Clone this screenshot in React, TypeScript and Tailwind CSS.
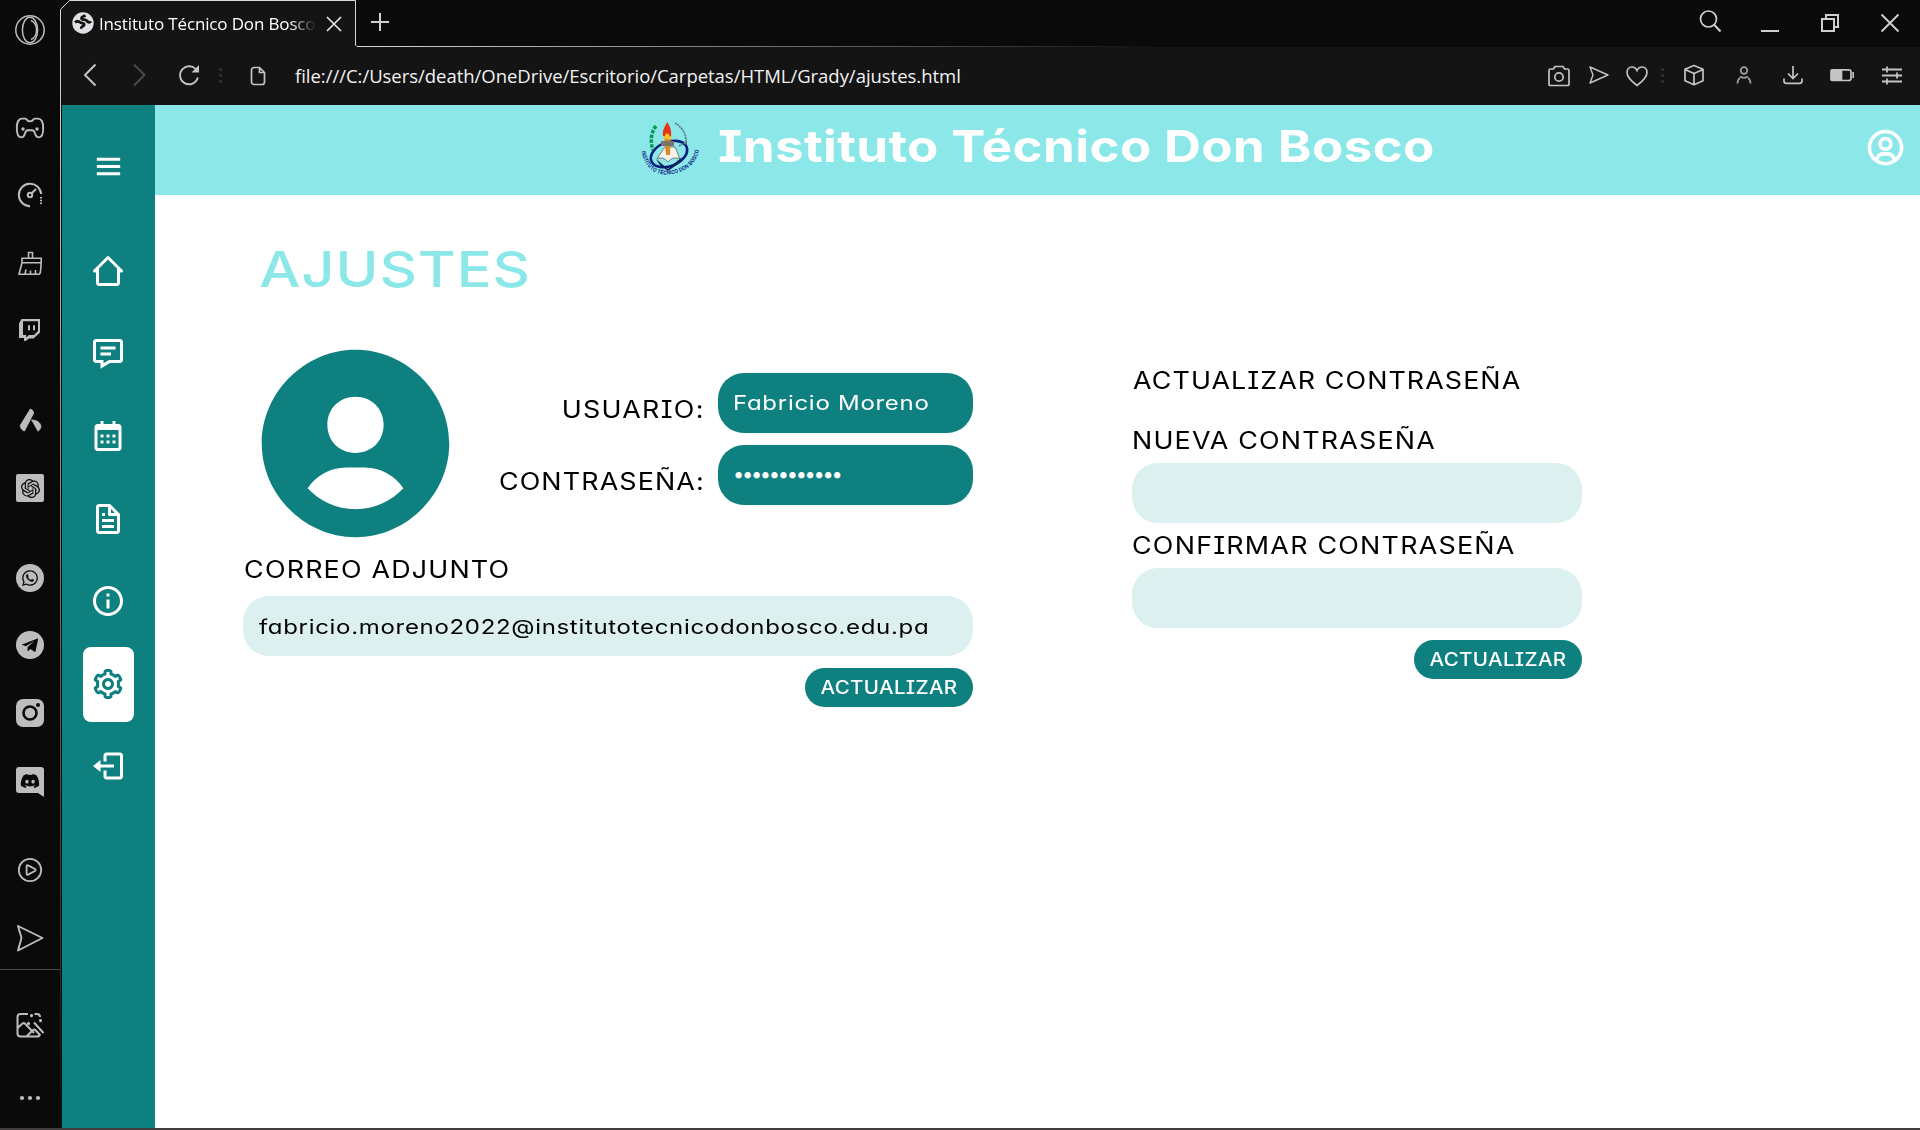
import React from "react";
import {
  BiMenu,
  BiMessageDetail,
  BiCalendar,
  BiFile,
  BiInfoCircle,
  BiCog,
  BiLogOut,
  BiUserCircle,
  BiSolidUserCircle,
} from "react-icons/bi";
import { SiOpenai } from "react-icons/si";
import { FaWhatsapp, FaDiscord } from "react-icons/fa";

/* ---------- Browser side bar ---------- */

type SvgProps = { className?: string; box?: string; children: React.ReactNode };

function Svg({ className = "size-8", box = "0 0 32 32", children }: SvgProps) {
  return (
    <svg className={className} viewBox={box} fill="none" stroke="currentColor" strokeWidth="1.7">
      {children}
    </svg>
  );
}

const OperaLogo = (
  <Svg>
    <circle cx="16" cy="16" r="14.2" strokeWidth="1.5" />
    <ellipse cx="16" cy="16" rx="7.6" ry="12.8" strokeWidth="1.5" />
    <path d="M17 6.5a8 10 0 0 1 0 19" strokeWidth="1.4" />
  </Svg>
);

const Gamepad = (
  <Svg>
    <path
      d="M8 6.600h3.200c1.200 0 1.600.9 2.400 2 .6.800 4.200.800 4.800 0 .8-1.100 1.200-2 2.400-2H24c3.600 0 5.200 4.500 5.200 9.500 0 4.900-1 9.300-4.200 9.300-2.800 0-3.400-1.600-4-3.800-.5-1.900-1.200-3.300-2.800-3.300h-4.400c-1.600 0-2.300 1.400-2.800 3.300-.6 2.200-1.200 3.800-4 3.800-3.200 0-4.200-4.400-4.200-9.300 0-5 1.600-9.500 5.200-9.500Z"
      strokeWidth="1.900"
    />
    <circle cx="9" cy="17" r="1.700" fill="currentColor" stroke="none" />
    <circle cx="23" cy="17" r="1.700" fill="currentColor" stroke="none" />
  </Svg>
);

const Speed = (
  <Svg>
    <path d="M16 27.200A11.200 11.200 0 1 1 27.200 15" strokeWidth="2" />
    <path d="M17.500 14.500 22 10" strokeWidth="2" />
    <circle cx="16" cy="16" r="2.200" strokeWidth="2" />
    <path d="M27 18v1.500M27 20.800v1.500M27 23.500V25" strokeWidth="2" />
  </Svg>
);

const Cleaner = (
  <Svg>
    <path
      d="M14.500 11V5.500h4V11M8 11.200h19.200v4.600H8zM8 15.800 5 27.200h19.500c1.300 0 1.800-.8 2-2.500l.7-8.900M11 27l1-4.500M16.500 27v-3.500M21.500 27v-4"
      strokeWidth="1.600"
    />
  </Svg>
);

const Twitch = (
  <Svg>
    <path d="M7.500 5H26v13.500l-6.500 6h-4.300L11.500 27H10v-3H5V9.500Z" fill="currentColor" stroke="none" />
    <path d="M9 7.200h15v9.800l-4 4h-5l-2.800 2.500V21H9Z" fill="#0a0a0a" stroke="none" />
    <path d="M15 11.200v5M20 11.200v5" strokeWidth="2" />
  </Svg>
);

const Aria = (
  <Svg>
    <path d="M16.300 5c1.700.4 3 1.800 3.400 4L10.500 27c-2.600-.8-4.200-2.700-4.300-5.500Z" fill="currentColor" stroke="currentColor" strokeWidth=".8" strokeLinejoin="round" />
    <path d="M17.500 16c4.700 0 8.800 2 9.500 6.500-.4 2.300-1.600 3.700-3 4.700-2.400-3.900-3.800-7.300-6.500-11.200Z" fill="currentColor" strokeWidth=".8" />
  </Svg>
);

const ChatGpt = (
  <span className="flex size-7 items-center justify-center rounded-[2px] bg-[#bdbdbd] text-[#0a0a0a]">
    <SiOpenai size={19} />
  </span>
);

const WhatsApp = (
  <span className="flex size-7 items-center justify-center rounded-full bg-[#bdbdbd] text-[#0a0a0a]">
    <FaWhatsapp size={18} />
  </span>
);

const Telegram = (
  <Svg>
    <circle cx="16" cy="16" r="14" fill="currentColor" stroke="none" />
    <path
      d="M7.500 15.800 23 9.700c.8-.3 1.200.1 1 1L21.600 22c-.2 1-.8 1.100-1.500.6l-3.700-2.700-1.900 1.900c-.5.400-1 .3-1-.4l.2-3.300 6.500-6-8.200 5.100-3.500-1.100c-1.200-.3-1.100-.9-1-1.300Z"
      fill="#0a0a0a"
      stroke="none"
    />
  </Svg>
);

const Instagram = (
  <Svg>
    <rect x="2" y="2" width="28" height="28" rx="7" fill="currentColor" stroke="none" />
    <circle cx="16" cy="16" r="6.500" stroke="#0a0a0a" strokeWidth="2.600" />
    <circle cx="24" cy="8" r="2" fill="#0a0a0a" stroke="none" />
  </Svg>
);

const Discord = (
  <span className="relative flex size-8 items-center justify-center text-[#0a0a0a]">
    <svg className="absolute inset-0 size-8" viewBox="0 0 32 32">
      <path d="M5 2h22a3 3 0 0 1 3 3v27l-6-4H5a3 3 0 0 1-3-3V5a3 3 0 0 1 3-3Z" fill="#bdbdbd" />
    </svg>
    <FaDiscord size={20} className="relative" />
  </span>
);

const Player = (
  <Svg>
    <circle cx="16" cy="16" r="11.200" strokeWidth="1.800" />
    <path d="M12.600 12.200v7.600c0 .8.700 1.200 1.400.8l7-3.600c.8-.4.8-1.500 0-2l-7-3.600c-.7-.4-1.400 0-1.400.8Z" strokeWidth="1.800" />
  </Svg>
);

const SendIcon = (
  <Svg>
    <path d="M4 4 28.500 16 4 28.500 7.500 16Z" strokeWidth="1.900" strokeLinejoin="round" />
  </Svg>
);

const Picture = (
  <Svg>
    <path
      d="M14 5H6.500a3 3 0 0 0-3 3v16.500a3 3 0 0 0 3 3H23a3 3 0 0 0 3-2.500M20.500 5H23a3 3 0 0 1 3 3M3.500 19l5-4.500c.8-.7 1.600-.7 2.400 0L20 24M13 27l6-6c.8-.8 1.600-.7 2.300 0l4.700 5M20 13.500 29.500 24"
      strokeWidth="2"
    />
    <path d="M17.500 5V8.200M16 6.700h3M14.500 13V16.200M13 14.700h3M26.500 10V13.200M25 11.700h3" strokeWidth="1.800" />
  </Svg>
);

const More = (
  <Svg>
    <g fill="currentColor" stroke="none">
      <circle cx="8" cy="16" r="2.100" />
      <circle cx="16" cy="16" r="2.100" />
      <circle cx="24" cy="16" r="2.100" />
    </g>
  </Svg>
);

const DOCK: [string, React.ReactNode][] = [
  ["mt-3.5", OperaLogo],
  ["mt-[66px]", Gamepad],
  ["mt-[35px]", Speed],
  ["mt-9", Cleaner],
  ["mt-[35px]", Twitch],
  ["mt-[58px]", Aria],
  ["mt-9", ChatGpt],
  ["mt-[58px]", WhatsApp],
  ["mt-[35px]", Telegram],
  ["mt-9", Instagram],
  ["mt-9", Discord],
  ["mt-[57px]", Player],
  ["mt-9", SendIcon],
];

function Dock() {
  return (
    <aside className="flex h-full w-[60px] shrink-0 flex-col items-center text-[#bdbdbd]">
      {DOCK.map(([margin, icon], i) => (
        <div key={i} className={`flex size-8 shrink-0 items-center justify-center ${margin}`}>
          {icon}
        </div>
      ))}
      <div className="mt-[15px] h-px w-full shrink-0 bg-[#4a4a4a]" />
      <div className="mt-[39px] size-8 shrink-0">{Picture}</div>
      <div className="mt-[41px] size-8 shrink-0">{More}</div>
    </aside>
  );
}

/* ---------- Tab strip and address bar ---------- */

function TabStrip() {
  return (
    <div className="flex h-[47px] shrink-0 items-center">
      <div className="mr-[15px] flex h-full w-[294px] items-center bg-[#141414] [clip-path:polygon(8px_0,100%_0,100%_100%,0_100%,0_8px)]">
        <svg className="mb-px ml-[10px] size-[22px] shrink-0" viewBox="0 0 22 22">
          <circle cx="11" cy="11" r="10.700" fill="#dfe1e5" />
          <path
            d="M3 10.500C4.500 9 6.500 8.800 8 10.300c1 1 2.500.8 3.500 1.200 1 .6.900 1.700 0 2.200-1.300.6-2.500 1.300-2.200 3M13.500 3.500c-1.500.6-3.800 1-4 2.600-.1 1.300 1.500 1.500 3 1.500 1.600 0 2 1.200 3.300 2.200 1.200.8 2.500.5 2.900-.5"
            fill="none"
            stroke="#141414"
            strokeWidth="2.800"
          />
        </svg>
        <span className="ml-[5px] w-[217px] overflow-hidden text-[17px] leading-[30px] tracking-[-0.15px] whitespace-nowrap text-white [mask-image:linear-gradient(to_right,black_88%,transparent)]">
          Instituto Técnico Don Bosco
        </span>
        <svg className="ml-[10px] size-4 shrink-0" viewBox="0 0 16 16" stroke="#e2e2e2" strokeWidth="1.700">
          <path d="m1 1 14 14M15 1 1 15" />
        </svg>
      </div>
      <svg className="mb-[3px] size-[18px]" viewBox="0 0 18 18" stroke="#d0d0d0" strokeWidth="2">
        <path d="M9 0v18M0 9h18" />
      </svg>
      <div className="ml-auto flex items-center gap-9 pr-[18px] pb-px text-[#cfcfcf]">
        <Svg className="mr-0 mb-1 size-6" box="0 0 24 24">
          <circle cx="10.500" cy="10" r="8" strokeWidth="1.700" />
          <path d="m16 15.500 6.500 7" strokeWidth="2" />
        </Svg>
        <Svg className="size-6" box="0 0 24 24">
          <path d="M3 20h18" strokeWidth="2" />
        </Svg>
        <Svg className="size-6" box="0 0 24 24">
          <path d="M4 8h12v12H4zM8 8V4h12v12h-4" strokeWidth="2" />
        </Svg>
        <Svg className="size-6" box="0 0 24 24">
          <path d="m3.500 3.500 17 17M20.500 3.500l-17 17" strokeWidth="1.900" />
        </Svg>
      </div>
    </div>
  );
}

function Dots() {
  return (
    <div className="flex flex-col gap-[3px]">
      <i className="size-[3px] bg-[#2e2e2e]" />
      <i className="size-[3px] bg-[#2e2e2e]" />
      <i className="size-[3px] bg-[#2e2e2e]" />
    </div>
  );
}

function AddressBar() {
  return (
    <div className="flex h-[58px] shrink-0 items-center bg-[#141414] pr-4 pb-0.5 text-[#c4c4c4]">
      <Svg className="ml-4 size-6" box="0 0 24 24">
        <path d="M17.500 1.500 7 12l10.500 10.500" strokeWidth="2" />
      </Svg>
      <Svg className="ml-[26px] size-6 text-[#4a4a4a]" box="0 0 24 24">
        <path d="M6 1.500 16.500 12 6 22.500" strokeWidth="2" />
      </Svg>
      <Svg className="ml-[25px] size-6" box="0 0 24 24">
        <path d="M20 8A9 9 0 1 0 20.800 14.500" strokeWidth="1.900" />
        <path d="M22 2v7.500h-7.500Z" fill="currentColor" stroke="none" />
      </Svg>
      <div className="ml-[18px]">
        <Dots />
      </div>
      <Svg className="mt-0.5 ml-[24px] size-6" box="0 0 24 24">
        <path d="M8 3.500h5.500l5 5V18a2.500 2.500 0 0 1-2.500 2.500H8A2.500 2.500 0 0 1 5.500 18V6A2.500 2.500 0 0 1 8 3.500ZM13.500 3.500v5h5" />
      </Svg>
      <span className="mt-0.5 ml-[25px] text-[18.5px] leading-[30px] tracking-[-0.03px] whitespace-nowrap text-[#f2f2f2]">
        file:///C:/Users/death/OneDrive/Escritorio/Carpetas/HTML/Grady/ajustes.html
      </span>
      <Svg className="mt-px ml-auto size-6" box="0 0 24 24">
        <path d="M3.500 5h3l1.500-2.500h8L17.500 5h3c1 0 1.500.5 1.500 1.500v14c0 .7-.5 1-1.500 1h-17c-1 0-1.500-.3-1.500-1v-14C2 5.500 2.500 5 3.500 5Z" />
        <circle cx="12" cy="13" r="4.200" />
      </Svg>
      <Svg className="ml-4 size-6" box="0 0 24 24">
        <path d="M3 4 21 12 3 20 6 12Z" strokeWidth="1.400" strokeLinejoin="round" />
      </Svg>
      <Svg className="mt-px ml-[14px] size-6" box="0 0 24 24">
        <path d="M12 21.500C6 17 2 13 2 8.500 2 5.500 4 3 7 3c2.200 0 4 1.200 5 3.500C13 4.200 14.800 3 17 3c3 0 5 2.500 5 5.500 0 4.500-4 8.500-10 13Z" />
      </Svg>
      <div className="ml-[12px]">
        <Dots />
      </div>
      <Svg className="ml-[18px] size-6" box="0 0 24 24">
        <path d="m12 2.500 9 3.800v11.400l-9 4-9-4V6.300ZM3 6.500l9 4 9-4M12 10.500v11" strokeLinejoin="round" />
      </Svg>
      <Svg className="ml-[26px] size-6 text-[#a2a2a2]" box="0 0 24 24">
        <circle cx="12" cy="7.500" r="3.300" />
        <path d="M5.500 20.500c0-3 .8-4.500 2.500-5.500M16 15c1.700 1 2.500 2.500 2.500 5.500M8 13.500c2.500 1.600 5.500 1.600 8 0" />
      </Svg>
      <Svg className="ml-[25px] size-6" box="0 0 24 24">
        <path d="M12 3v12M7 10.500l5 5 5-5M3 15.500V18c0 1.500.8 2.300 2.300 2.300h13.400c1.500 0 2.300-.8 2.300-2.300v-2.500" />
      </Svg>
      <Svg className="ml-[25px] size-6" box="0 0 24 24">
        <rect x="1" y="6.800" width="20" height="10.700" rx="2.300" />
        <path d="M1.500 7h10v10.200h-10Z" fill="currentColor" />
        <path d="M23.200 9v6" />
      </Svg>
      <Svg className="ml-[26px] size-6" box="0 0 24 24">
        <path d="M2 6.500h20M2 12.500h20M2 18.500h20M7 3.500v6M17 9.500v6M7 15.500v6" strokeWidth="1.800" />
      </Svg>
    </div>
  );
}

/* Thin outline that wraps the active tab and fades along both edges. */
function TabOutline() {
  return (
    <svg className="pointer-events-none absolute inset-0 h-[1130px] w-[1920px]" viewBox="0 0 1920 1130" fill="none">
      <defs>
        <linearGradient id="fadeDown" gradientUnits="userSpaceOnUse" x1="0" y1="0" x2="0" y2="1128">
          <stop offset="0" stopColor="#e0e0e0" />
          <stop offset="1" stopColor="#0f0f0f" />
        </linearGradient>
        <linearGradient id="fadeRight" gradientUnits="userSpaceOnUse" x1="356" y1="0" x2="1150" y2="0">
          <stop offset="0" stopColor="#d8d8d8" />
          <stop offset="1" stopColor="#111111" />
        </linearGradient>
      </defs>
      <path d="M60.500 1128V9.500L69.500 .5H70" stroke="url(#fadeDown)" />
      <path d="M69.500 .5H355.500V45L357 46.500" stroke="#d8d8d8" />
      <path d="M357 46h793v1h-793z" fill="url(#fadeRight)" />
    </svg>
  );
}

/* ---------- Page ---------- */

function HomeIcon() {
  return (
    <svg className="size-9" viewBox="0 0 24 24" fill="currentColor">
      <path d="M3 13h1v7c0 1.103.897 2 2 2h12c1.103 0 2-.897 2-2v-7h1a1 1 0 0 0 .707-1.707l-9-9a.999.999 0 0 0-1.414 0l-9 9A1 1 0 0 0 3 13zm9-8.586 6 6V15l.001 5H6v-9.585l6-6.001z" />
    </svg>
  );
}

const MENU = [
  { icon: <HomeIcon /> },
  { icon: <BiMessageDetail size={36} /> },
  { icon: <BiCalendar size={36} /> },
  { icon: <BiFile size={36} /> },
  { icon: <BiInfoCircle size={36} /> },
  { icon: <BiCog size={36} />, active: true },
  { icon: <BiLogOut size={36} /> },
];

function SideMenu() {
  return (
    <nav className="flex w-[93px] shrink-0 flex-col items-center bg-[#0f8080] text-white">
      <BiMenu size={35} className="mt-11" />
      <ul className="mt-[50px] flex flex-col gap-[7.5px]">
        {MENU.map((item, i) => (
          <li
            key={i}
            className={
              item.active
                ? "flex h-[75px] w-[51px] items-center justify-center rounded-lg bg-white pr-px text-[#0f8080]"
                : "flex h-[75px] w-[51px] items-center justify-center pr-px pb-px"
            }
          >
            {item.icon}
          </li>
        ))}
      </ul>
    </nav>
  );
}

function Emblem() {
  return (
    <svg className="h-[60px] w-[60px] overflow-visible" viewBox="0 0 60 60">
      <defs>
        <path id="arcText" d="M2.500 31C5 43 11 52 24 52.500C40 53 56 43 56 27" />
      </defs>
      <g fill="none" transform="rotate(-22 28 34)">
        <ellipse cx="28" cy="34" rx="19" ry="12" stroke="#04207f" strokeWidth="2.600" />
      </g>
      <path d="M15 6C10 12 9 22 12 30" stroke="#0a9a55" strokeWidth="3.600" strokeDasharray="3.500 1.300" fill="none" />
      <path d="M34 3c7 4 12 11 11 22M38 26l8-4" stroke="#5d7f85" strokeWidth="1.700" strokeDasharray="2 .6" fill="none" />
      <path d="m15 39 12 10 14-12-4 7-10 7-8-6Z" fill="#0a1c55" />
      <path d="M16 39c4-2 8-1 11 3 3-4 7-5 12-3l-5-12h-4l-3-2-4 3Z" fill="#f6f4ea" stroke="#59616b" strokeWidth=".8" />
      <path d="M23 16h7l-1 19h-4Z" fill="#d98a2b" />
      <path d="M20 21h13v5H20z" fill="#7d7368" />
      <path d="M22 16c-1-6 2-9 4-14 3 4 5 9 4 14Z" fill="#e8331c" />
      <path d="M23 19c0-3 1-4 3-6 2 2 4 3 4 6Z" fill="#ffc01f" />
      <text fill="#04207f" fontSize="5.800" fontWeight="700" fontFamily="Liberation Sans, sans-serif" dominantBaseline="middle">
        <textPath href="#arcText" textLength="76" lengthAdjust="spacingAndGlyphs">
          INSTITUTO TÉCNICO DON BOSCO
        </textPath>
      </text>
    </svg>
  );
}

function Header() {
  return (
    <header className="flex h-[90px] shrink-0 items-center bg-[#8ce8e8] pr-[13px] pl-[486px] text-white">
      <Emblem />
      <h1 className="mb-2 ml-[17px] origin-left scale-x-116 text-[44px] leading-[60px] font-bold tracking-[0.35px] whitespace-nowrap">
        Instituto Técnico Don Bosco
      </h1>
      <BiUserCircle size={43} className="mb-[5px] ml-auto" />
    </header>
  );
}

function Label({ className = "", children }: { className?: string; children: React.ReactNode }) {
  return (
    <div className={`h-[27px] origin-left scale-x-112 text-[24px] leading-[28px] whitespace-nowrap ${className}`}>
      {children}
    </div>
  );
}

function UpdateButton() {
  return (
    <button className="mt-3 flex h-[39px] w-[168px] items-center justify-center self-end rounded-full bg-[#0f8080] text-white">
      <span className="scale-x-114 text-[18px] leading-[39px] font-medium tracking-[0.3px]">ACTUALIZAR</span>
    </button>
  );
}

function ProfileColumn() {
  return (
    <section className="flex w-[730px] flex-col">
      <div className="flex h-[225px] justify-between">
        <BiSolidUserCircle size={225} className="shrink-0 text-[#0f8080]" />
        <div className="flex flex-col items-end gap-3 pt-[42px]">
          <div className="flex gap-[13px]">
            <Label className="mt-[23px] !origin-right tracking-[1.15px]">USUARIO:</Label>
            <div className="flex h-[60px] w-[255px] items-center rounded-[26px] bg-[#0f8080] pl-[15px] text-white">
              <span className="origin-left scale-x-120 text-[20px] tracking-[0.6px] whitespace-nowrap">Fabricio Moreno</span>
            </div>
          </div>
          <div className="flex gap-[13px]">
            <Label className="mt-[23px] !origin-right tracking-[1px]">CONTRASEÑA:</Label>
            <div className="flex h-[60px] w-[255px] items-center rounded-[26px] bg-[#0f8080] pb-[3px] pl-[15px] text-white">
              <span className="text-[20px] tracking-[-2.3px]">••••••••••••</span>
            </div>
          </div>
        </div>
      </div>
      <Label className="pl-px tracking-[1.05px]">CORREO ADJUNTO</Label>
      <div className="mt-[13px] flex h-[60px] items-center rounded-[26px] bg-[#dcf0ef] pt-0.5 pl-4">
        <span className="origin-left scale-x-120 text-[20px] tracking-[0.57px] whitespace-nowrap">
          fabricio.moreno2022@institutotecnicodonbosco.edu.pa
        </span>
      </div>
      <UpdateButton />
    </section>
  );
}

function PasswordColumn() {
  return (
    <section className="flex w-[450px] flex-col pt-9">
      <Label className="pl-px tracking-[0.95px]">ACTUALIZAR CONTRASEÑA</Label>
      <Label className="mt-[33px] tracking-[1.05px]">NUEVA CONTRASEÑA</Label>
      <div className="mt-[9px] h-[60px] rounded-[26px] bg-[#dcf0ef]" />
      <Label className="mt-[9px] tracking-[1.1px]">CONFIRMAR CONTRASEÑA</Label>
      <div className="mt-[9px] h-[60px] rounded-[26px] bg-[#dcf0ef]" />
      <UpdateButton />
    </section>
  );
}

export default function App() {
  return (
    <div className="relative flex h-[1130px] w-[1920px] flex-col overflow-hidden bg-[#0a0a0a] font-['Open_Sans',sans-serif]">
      <div className="flex h-[1128px]">
        <Dock />
        <div className="flex flex-1 flex-col pl-0.5">
          <TabStrip />
          <AddressBar />
          <div className="flex flex-1 bg-white font-['Inter',sans-serif] text-black [font-feature-settings:'cv08','cv11']">
            <SideMenu />
            <div className="flex flex-1 flex-col">
              <Header />
              <main className="pt-11 pl-[88px]">
                <h2 className="origin-left scale-x-116 pl-[14px] text-[50px] leading-[60px] font-medium tracking-[0.8px] text-[#8ce8e8]">
                  AJUSTES
                </h2>
                <div className="mt-8 flex gap-[159px]">
                  <ProfileColumn />
                  <PasswordColumn />
                </div>
              </main>
            </div>
          </div>
        </div>
      </div>
      <div className="h-0.5 bg-[#403e3f]" />
      <TabOutline />
    </div>
  );
}
